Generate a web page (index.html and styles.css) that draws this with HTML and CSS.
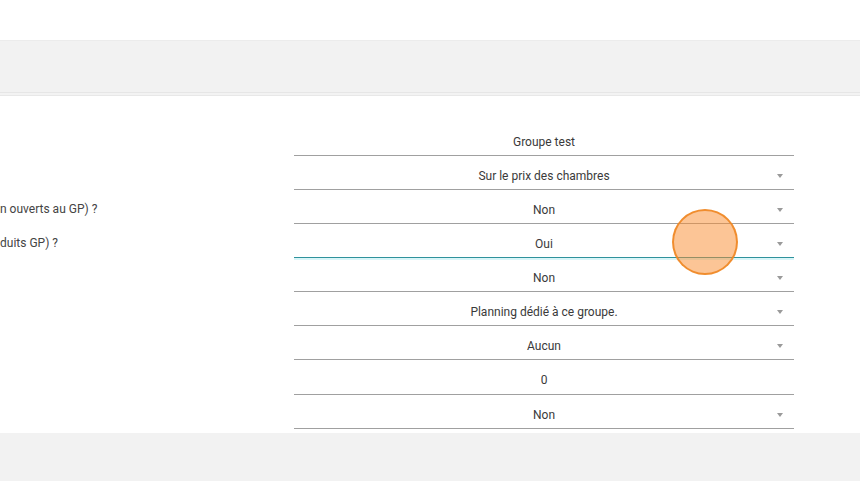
FILE: index.html
```html
<!DOCTYPE html>
<html lang="fr">
<head>
    <meta charset="UTF-8">
    <meta name="viewport" content="width=device-width, initial-scale=1.0">
    <title>Groupe</title>
    <link rel="stylesheet" href="styles.css">
</head>
<body>
    <div class="topbar"></div>
    <div class="toolbar"></div>

    <div class="form">
        <div class="row">
            <div class="label"></div>
            <div class="field">Groupe test</div>
        </div>
        <div class="row">
            <div class="label"></div>
            <div class="field select">Sur le prix des chambres<span class="arrow"></span></div>
        </div>
        <div class="row">
            <div class="label">n ouverts au GP) ?</div>
            <div class="field select">Non<span class="arrow"></span></div>
        </div>
        <div class="row">
            <div class="label">duits GP) ?</div>
            <div class="field select focused">Oui<span class="arrow"></span></div>
        </div>
        <div class="row">
            <div class="label"></div>
            <div class="field select">Non<span class="arrow"></span></div>
        </div>
        <div class="row">
            <div class="label"></div>
            <div class="field select">Planning dédié à ce groupe.<span class="arrow"></span></div>
        </div>
        <div class="row">
            <div class="label"></div>
            <div class="field select">Aucun<span class="arrow"></span></div>
        </div>
        <div class="row tall">
            <div class="label"></div>
            <div class="field">0</div>
        </div>
        <div class="row">
            <div class="label"></div>
            <div class="field select">Non<span class="arrow"></span></div>
        </div>
    </div>

    <div class="footer"></div>

    <!-- touch indicator -->
    <div class="touch"></div>
</body>
</html>
```

FILE: styles.css
```css
body {
    margin: 0;
    font-family: Roboto, "Liberation Sans", Arial, sans-serif;
    font-size: 12px;
    color: #333;
    background: #fff;
    overflow: hidden;
}
.topbar {
    height: 40px;
    background: #fff;
}
.toolbar {
    height: 51px;
    background: #f2f2f2;
    border-top: 1px solid #ececec;
    border-bottom: 1px solid #e6e6e6;
    box-shadow: 0 2px 0 #f3f3f3, 0 3px 0 #e8e8e8;
}
.form {
    padding-top: 29px;
}
.row {
    display: flex;
    height: 34px;
}
.row.tall {
    height: 35px;
}
.label {
    width: 294px;
    padding-top: 12px;
    box-sizing: border-box;
    color: #444;
    white-space: nowrap;
}
.field {
    position: relative;
    width: 500px;
    box-sizing: border-box;
    border-bottom: 1px solid #a0a0a0;
    text-align: center;
    line-height: 33px;
    padding-top: 4px;
    color: #3a3a3a;
}
.field.focused {
    border-bottom-color: #2f929c;
    box-shadow: 0 2px 0 rgba(170, 235, 242, 0.45);
}
.arrow {
    position: absolute;
    right: 11px;
    top: 18px;
    width: 0;
    height: 0;
    border-left: 3.5px solid transparent;
    border-right: 3.5px solid transparent;
    border-top: 4px solid #9a9a9a;
}
.footer {
    margin-top: 4px;
    height: 60px;
    background: #f2f2f2;
}
.touch {
    position: absolute;
    left: 672px;
    top: 209px;
    width: 62px;
    height: 62px;
    border-radius: 50%;
    background: rgba(249, 140, 45, 0.5);
    border: 2px solid rgba(240, 135, 35, 0.9);
}
```
